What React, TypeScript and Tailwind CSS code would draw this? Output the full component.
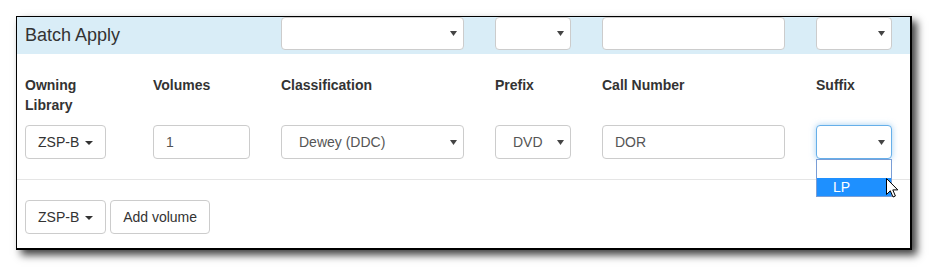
const cols = 'grid grid-cols-[128px_128px_214px_107px_214px_1fr] pl-[8px]'

// small triangle used by native-looking selects
const SelectArrow = () => (
  <svg width="7" height="5" viewBox="0 0 7 5" className="shrink-0">
    <polygon points="0,0 7,0 3.5,5" fill="#444" />
  </svg>
)

const Caret = () => (
  <span className="inline-block w-0 h-0 ml-[2px] align-middle border-t-[4px] border-t-[#333] border-x-[4px] border-x-transparent" />
)

const Select = ({ width, value, focused, short }: { width: string; value?: string; focused?: boolean; short?: boolean }) => (
  <div
    className={`${width} ${short ? 'h-[33px]' : 'h-[34px]'} rounded-[4px] bg-white border flex items-center justify-between pl-[17px] pr-[6px] text-[14px] leading-[32px] text-[#555] ${
      focused ? 'border-[#66afe9] shadow-[0_0_6px_rgba(102,175,233,0.6)]' : 'border-[#ccc]'
    }`}
  >
    <span>{value}</span>
    <SelectArrow />
  </div>
)

const Input = ({ width, value, short }: { width: string; value?: string; short?: boolean }) => (
  <div className={`${width} ${short ? 'h-[33px]' : 'h-[34px]'} rounded-[4px] bg-white border border-[#ccc] px-[12px] text-[14px] leading-[32px] text-[#555]`}>
    {value}
  </div>
)

const Button = ({ children }: { children: React.ReactNode }) => (
  <div className="h-[34px] rounded-[4px] bg-white border border-[#ccc] px-[12px] text-[14px] leading-[32px] text-[#333] whitespace-nowrap">
    {children}
  </div>
)

const Cursor = () => (
  <svg width="13" height="20" viewBox="0 0 13 20">
    <path d="M0.5 0.5 L0.5 16.5 L4.3 12.8 L7 19 L9.4 18 L6.8 11.9 L11.8 11.9 Z" fill="#fff" stroke="#000" strokeWidth="1" strokeLinejoin="round" />
  </svg>
)

export default function App() {
  return (
    <div className="w-[929px] h-[267px] bg-white pl-[16px] pt-[16px] font-['Liberation_Sans',Arial,sans-serif]">
      <div className="w-[896px] h-[234px] bg-white border-black border-t border-l border-r-2 border-b-2 shadow-[5px_5px_8px_rgba(0,0,0,0.75)]">
        {/* batch apply bar */}
        <div className={`${cols} h-[37px] bg-[#d9edf7] items-start`}>
          <div className="col-span-2 h-[37px] leading-[37px] text-[18px] text-[#333]">Batch Apply</div>
          <Select width="w-[183px]" short />
          <Select width="w-[76px]" short />
          <Input width="w-[183px]" short />
          <Select width="w-[76px]" short />
        </div>

        {/* column labels + first volume row */}
        <div className={`${cols} pt-[21px] gap-y-[10px] text-[14px] leading-[20px] font-bold text-[#333]`}>
          <div className="w-[98px] h-[40px]">Owning Library</div>
          <div>Volumes</div>
          <div>Classification</div>
          <div>Prefix</div>
          <div>Call Number</div>
          <div>Suffix</div>

          <div className="flex font-normal">
            <Button>
              ZSP-B <Caret />
            </Button>
          </div>
          <div className="font-normal">
            <Input width="w-[97px]" value="1" />
          </div>
          <div className="font-normal">
            <Select width="w-[183px]" value="Dewey (DDC)" />
          </div>
          <div className="font-normal">
            <Select width="w-[76px]" value="DVD" />
          </div>
          <div className="font-normal">
            <Input width="w-[183px]" value="DOR" />
          </div>
          <div className="relative font-normal">
            <Select width="w-[76px]" focused />
            {/* open option list */}
            <div className="absolute left-0 top-[34px] w-[76px] h-[38px] bg-white border border-[#7a9ed6] z-10">
              <div className="h-[18px]" />
              <div className="h-[18px] bg-[#1e90ff] text-white pl-[16px] text-[14px] leading-[18px]">LP</div>
            </div>
            <div className="absolute left-[70px] top-[53px] z-20">
              <Cursor />
            </div>
          </div>
        </div>

        <div className="mt-[20px] h-px bg-[#e5e5e5]" />

        <div className="flex gap-[4px] pl-[8px] pt-[20px]">
          <Button>
            ZSP-B <Caret />
          </Button>
          <Button>Add volume</Button>
        </div>
      </div>
    </div>
  )
}
